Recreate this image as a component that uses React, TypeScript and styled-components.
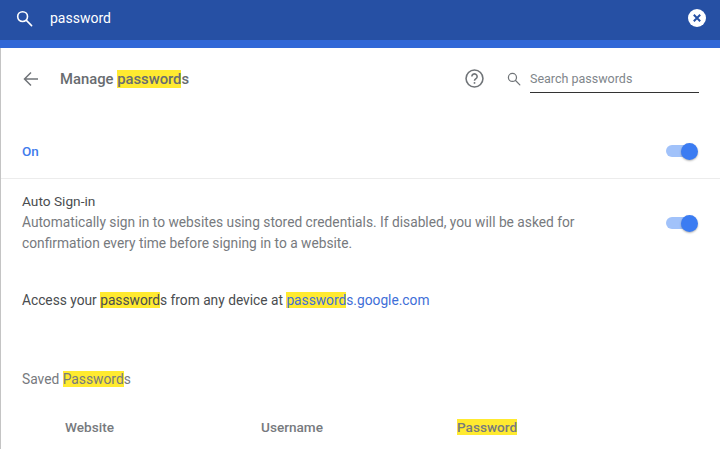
import styled, { createGlobalStyle } from 'styled-components';

const GlobalStyle = createGlobalStyle`
  html, body {
    margin: 0;
    padding: 0;
    background: #fff;
    overflow: hidden;
  }
  body {
    font-family: Roboto, "Liberation Sans", sans-serif;
    font-size: 13px;
  }
`;

const Page = styled.div`
  width: 720px;
  height: 449px;
  overflow: hidden;
  display: flex;
  flex-direction: column;
`;

const SearchBar = styled.div`
  height: 40px;
  box-sizing: border-box;
  background: #2650a4;
  display: flex;
  align-items: center;
  padding: 0 14px 4px 16px;
  color: #fff;
  flex-shrink: 0;
`;

const SearchText = styled.span`
  font-size: 14px;
  margin-left: 17px;
  flex: 1;
`;

const AccentStrip = styled.div`
  height: 8px;
  background: #3067d6;
  flex-shrink: 0;
`;

const Content = styled.main`
  flex: 1;
  border-left: 1px solid #c4c4c4;
  display: flex;
  flex-direction: column;
`;

const TitleRow = styled.div`
  height: 61px;
  display: flex;
  align-items: center;
  padding: 0 21px 0 21px;
`;

const Title = styled.h1`
  margin: 0 0 0 20px;
  font-size: 14.8px;
  font-weight: 500;
  color: #686c70;
  flex: 1;
`;

const HelpButton = styled.div`
  display: flex;
  margin-right: 23px;
`;

const SearchField = styled.div`
  display: flex;
  align-items: center;
  gap: 9px;
`;

const SearchInput = styled.div`
  width: 169px;
  height: 29px;
  border-bottom: 1px solid #333;
  font-size: 12.5px;
  color: #80868b;
  display: flex;
  align-items: center;
  box-sizing: border-box;
  padding: 2px 0 1px;
`;

const Row = styled.div<{ $divider?: boolean }>`
  display: flex;
  align-items: center;
  justify-content: space-between;
  box-sizing: border-box;
  padding: 0 22px 0 21px;
  ${({ $divider }) => $divider && 'border-bottom: 1px solid #ececec;'}
`;

const OnRow = styled(Row)`
  height: 58px;
  margin-top: 12px;
  padding-top: 3px;
`;

const OnLabel = styled.span`
  color: #3f7cec;
  font-weight: 500;
  font-size: 13.5px;
`;

const AutoRow = styled(Row)`
  padding-top: 13px;
`;

const AutoTitle = styled.div`
  color: #4a4d50;
  font-size: 13.7px;
  line-height: 18px;
  margin-bottom: 2px;
`;

const AutoText = styled.div`
  color: #777a7e;
  font-size: 13.75px;
  line-height: 21px;
  width: 600px;
`;

const Switch = styled.div`
  position: relative;
  width: 29px;
  height: 12px;
  border-radius: 6px;
  background: #a1c2fa;
  flex-shrink: 0;
  margin-right: 3px;
`;

const Knob = styled.div`
  position: absolute;
  right: -3px;
  top: -2.5px;
  width: 17px;
  height: 17px;
  border-radius: 50%;
  background: #3b7cf2;
  box-shadow: 0 1px 2px rgba(0, 0, 0, 0.3);
`;

const AccessLine = styled.p`
  margin: 37px 0 0 21px;
  color: #4a4d50;
  font-size: 13.75px;
  line-height: 18px;
`;

const Link = styled.span`
  color: #3f6fd8;
`;

const Mark = styled.mark`
  background: #ffea30;
  color: inherit;
`;

const SectionTitle = styled.h2`
  margin: 61px 0 0 21px;
  color: #777a7e;
  font-size: 13.8px;
  font-weight: 400;
  line-height: 18px;
`;

const TableHead = styled.div`
  display: grid;
  grid-template-columns: 196px 196px 1fr;
  margin: 30px 0 0 64px;
  color: #777a7e;
  font-weight: 500;
  font-size: 13.6px;
  line-height: 18px;
`;

const SearchIcon = ({ size, color, width }: { size: number; color: string; width: number }) => (
  <svg width={size} height={size} viewBox="0 0 18 18" fill="none" stroke={color} strokeWidth={width}>
    <circle cx="7" cy="7" r="5.2" />
    <path d="M11 11l5.5 5.5" strokeLinecap="round" />
  </svg>
);

const ClearIcon = () => (
  <svg width="18" height="18" viewBox="0 0 18 18">
    <circle cx="9" cy="9" r="9" fill="#fff" />
    <path d="M5.8 5.8l6.4 6.4M12.2 5.8l-6.4 6.4" stroke="#2650a4" strokeWidth="2" />
  </svg>
);

const BackIcon = () => (
  <svg width="18" height="18" viewBox="0 0 18 18" fill="none" stroke="#707478" strokeWidth="1.5">
    <path d="M16 9H3M9 2.5L2.5 9 9 15.5" />
  </svg>
);

const HelpIcon = () => (
  <svg width="19" height="19" viewBox="0 0 18 18" fill="none" stroke="#707478" strokeWidth="1.5">
    <circle cx="9" cy="9" r="8" />
    <path d="M6.5 7.2a2.5 2.5 0 1 1 3.9 2c-.9.6-1.4 1-1.4 2" />
    <path d="M9 12.4v1.6" />
  </svg>
);

const Toggle = () => (
  <Switch>
    <Knob />
  </Switch>
);

const App = () => (
  <Page>
    <GlobalStyle />
    <SearchBar>
      <SearchIcon size={17} color="#fff" width={1.7} />
      <SearchText>password</SearchText>
      <ClearIcon />
    </SearchBar>
    <AccentStrip />
    <Content>
      <TitleRow>
        <BackIcon />
        <Title>
          Manage <Mark>password</Mark>s
        </Title>
        <HelpButton>
          <HelpIcon />
        </HelpButton>
        <SearchField>
          <SearchIcon size={14} color="#707478" width={1.6} />
          <SearchInput>Search passwords</SearchInput>
        </SearchField>
      </TitleRow>
      <OnRow $divider>
        <OnLabel>On</OnLabel>
        <Toggle />
      </OnRow>
      <AutoRow>
        <div>
          <AutoTitle>Auto Sign-in</AutoTitle>
          <AutoText>
            Automatically sign in to websites using stored credentials. If disabled, you will be asked for
            confirmation every time before signing in to a website.
          </AutoText>
        </div>
        <Toggle />
      </AutoRow>
      <AccessLine>
        Access your <Mark>password</Mark>s from any device at{' '}
        <Link>
          <Mark>password</Mark>s.google.com
        </Link>
      </AccessLine>
      <SectionTitle>
        Saved <Mark>Password</Mark>s
      </SectionTitle>
      <TableHead>
        <span>Website</span>
        <span>Username</span>
        <span>
          <Mark>Password</Mark>
        </span>
      </TableHead>
    </Content>
  </Page>
);

export default App;
